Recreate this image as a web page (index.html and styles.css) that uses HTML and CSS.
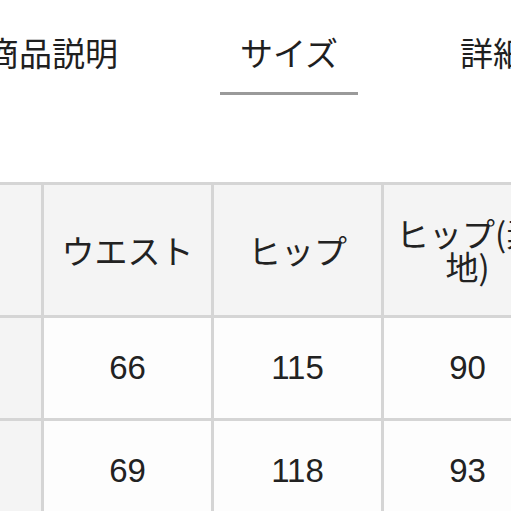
FILE: index.html
```html
<!DOCTYPE html>
<html lang="ja">
<head>
<meta charset="utf-8">
<link rel="stylesheet" href="styles.css">
</head>
<body>
<nav class="tabs">
  <a class="tab">商品説明</a>
  <a class="tab active">サイズ</a>
  <a class="tab">詳細</a>
</nav>
<div class="table-wrap">
  <table class="size-table">
    <tr class="head">
      <th class="label"></th>
      <th>ウエスト</th>
      <th>ヒップ</th>
      <th>ヒップ(素地)</th>
    </tr>
    <tr>
      <th class="label">S</th>
      <td>66</td>
      <td>115</td>
      <td>90</td>
    </tr>
    <tr>
      <th class="label">M</th>
      <td>69</td>
      <td>118</td>
      <td>93</td>
    </tr>
  </table>
</div>
</body>
</html>
```
FILE: styles.css
```css
html, body {
  margin: 0;
  padding: 0;
  background: #ffffff;
  overflow: hidden;
}
body {
  width: 511px;
  height: 511px;
  font-family: "Noto Sans CJK JP", "Noto Sans", sans-serif;
  color: #222222;
}
.tabs {
  display: flex;
  gap: 82px;
  margin-left: -34px;
  padding-top: 32px;
  white-space: nowrap;
}
.tab {
  display: block;
  padding: 0 20px 20px;
  font-size: 33px;
  line-height: 40px;
  border-bottom: 3px solid transparent;
  color: #1f1f1f;
}
.tab.active {
  border-bottom-color: #9a9a9a;
}
.table-wrap {
  margin-top: 87px;
  margin-left: -129px;
}
.size-table {
  border-collapse: collapse;
  table-layout: fixed;
  width: 680px;
}
.size-table th,
.size-table td {
  width: 147px;
  border: 3px solid #d5d5d5;
  text-align: center;
  vertical-align: middle;
  padding: 0 10px;
  background: #fdfdfd;
}
.size-table .head th {
  height: 130px;
  background: #f4f4f4;
  font-size: 33px;
  font-weight: 400;
  line-height: 33px;
  color: #222222;
}
.size-table td {
  height: 100px;
  font-family: "Liberation Sans", Arial, sans-serif;
  font-size: 33px;
  color: #222222;
}
.size-table th.label {
  background: #f4f4f4;
  color: transparent;
  font-weight: 400;
}
```
